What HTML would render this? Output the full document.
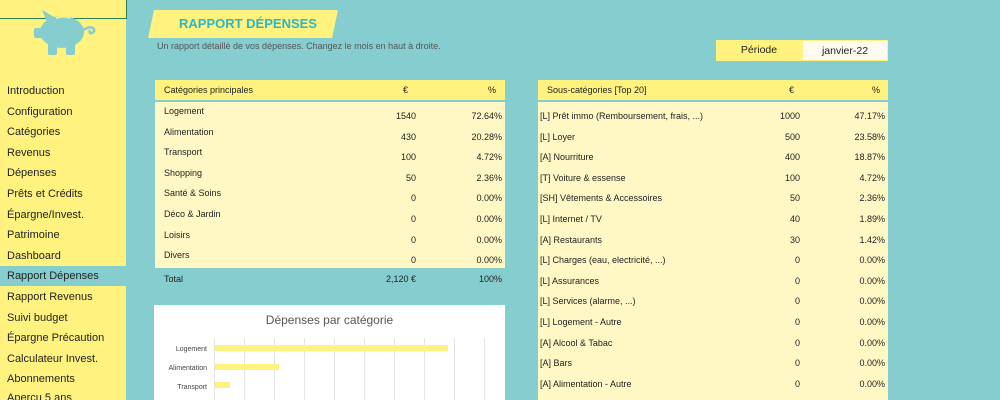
<!DOCTYPE html>
<html style="width:1000px;height:400px;overflow:hidden"><head><meta charset="utf-8"><style>
*{margin:0;padding:0;box-sizing:border-box}
body{width:1000px;height:400px;overflow:hidden;background:#86cdd0;font-family:"Liberation Sans",sans-serif;position:relative;color:#222}
.a{position:absolute;white-space:nowrap}
#side{position:absolute;left:0;top:0;width:126px;height:400px;background:#fff27f}
.nav{position:absolute;left:0;width:126px;height:20px;font-size:11px;padding-left:7px;line-height:20px;color:#222}
.row{position:absolute;font-size:9px;line-height:20.6px;height:20.6px}
</style></head><body>
<div id="side">
<div class="a" style="left:0;top:0;width:127px;height:19px;border:1px solid #2e7d4f;border-top:none;border-left:none"></div>
<svg class="a" style="left:32px;top:8px" width="66" height="48" viewBox="0 0 66 48">
<ellipse cx="30" cy="24" rx="22" ry="16" fill="#86cdd0"/>
<path d="M10 2 L24 10 L16 16Z" fill="#86cdd0"/>
<rect x="2" y="20" width="9" height="10" rx="2" fill="#86cdd0"/>
<rect x="16" y="34" width="9" height="13" rx="2" fill="#86cdd0"/>
<rect x="34" y="34" width="9" height="13" rx="2" fill="#86cdd0"/>
<path d="M51 22 q6 -4 10 -2 q3 3 -1 5 q-3 1 -2 -3" stroke="#86cdd0" stroke-width="2.5" fill="none"/>
<path d="M24 10 q8 -3 14 0" stroke="#fff27f" stroke-width="2" fill="none"/>
</svg>
</div>
<div class="nav" style="top:81px">Introduction</div>
<div class="nav" style="top:101.6px">Configuration</div>
<div class="nav" style="top:122.2px">Catégories</div>
<div class="nav" style="top:142.8px">Revenus</div>
<div class="nav" style="top:163.4px">Dépenses</div>
<div class="nav" style="top:184px">Prêts et Crédits</div>
<div class="nav" style="top:204.6px">Épargne/Invest.</div>
<div class="nav" style="top:225.2px">Patrimoine</div>
<div class="nav" style="top:245.8px">Dashboard</div>
<div class="nav" style="top:266px;background:#86cdd0">Rapport Dépenses</div>
<div class="nav" style="top:287px">Rapport Revenus</div>
<div class="nav" style="top:307.6px">Suivi budget</div>
<div class="nav" style="top:328.2px">Épargne Précaution</div>
<div class="nav" style="top:348.8px">Calculateur Invest.</div>
<div class="nav" style="top:369.4px">Abonnements</div>
<div class="nav" style="top:388px;height:12px;overflow:hidden">Aperçu 5 ans</div>

<svg class="a" style="left:148px;top:10px" width="192" height="28"><polygon points="6,0 190,0 184,28 0,28" fill="#fff27f"/></svg>
<div class="a" style="left:179px;top:16px;font-size:13px;font-weight:bold;color:#2db7c3">RAPPORT DÉPENSES</div>
<div class="a" style="left:157px;top:41px;font-size:9px;color:#555">Un rapport détaillé de vos dépenses. Changez le mois en haut à droite.</div>

<div class="a" style="left:716px;top:40px;width:86px;height:21px;background:#fff27f;font-size:10.5px;text-align:center;line-height:21px">Période</div>
<div class="a" style="left:802px;top:40px;width:86px;height:21px;background:#fffaf0;border:1px solid #fff27f;font-size:10.5px;text-align:center;line-height:20px">janvier-22</div>

<div class="a" style="left:155px;top:80px;width:350px;height:20px;background:#fff27f"></div>
<div class="a" style="left:155px;top:102px;width:350px;height:166px;background:#fff8c4"></div>
<div class="row" style="left:164px;top:80px">Catégories principales</div>
<div class="row" style="left:403px;top:80px">€</div>
<div class="row" style="left:488px;top:80px">%</div>
<div id="lt"></div>
<div class="row" style="left:164px;top:269px">Total</div>
<div class="row" style="left:350px;width:66px;text-align:right;top:269px">2,120 €</div>
<div class="row" style="left:440px;width:62px;text-align:right;top:269px">100%</div>

<div class="a" style="left:154px;top:305px;width:351px;height:95px;background:#fff"></div>
<div class="a" style="left:154px;top:313px;width:351px;text-align:center;font-size:12px;color:#555">Dépenses par catégorie</div>
<svg class="a" style="left:154px;top:305px" width="351" height="95">
<g stroke="#e4e4e4" stroke-width="1">
<line x1="60.5" y1="33" x2="60.5" y2="95"/><line x1="90.5" y1="33" x2="90.5" y2="95"/><line x1="120.5" y1="33" x2="120.5" y2="95"/><line x1="150.5" y1="33" x2="150.5" y2="95"/><line x1="180.5" y1="33" x2="180.5" y2="95"/><line x1="210.5" y1="33" x2="210.5" y2="95"/><line x1="240.5" y1="33" x2="240.5" y2="95"/><line x1="270.5" y1="33" x2="270.5" y2="95"/><line x1="300.5" y1="33" x2="300.5" y2="95"/><line x1="330.5" y1="33" x2="330.5" y2="95"/>
</g>
<rect x="61" y="40" width="233" height="6" fill="#fff27f"/>
<rect x="61" y="59" width="64" height="6" fill="#fff27f"/>
<rect x="61" y="77" width="15" height="6" fill="#fff27f"/>
<g font-size="7" fill="#444" text-anchor="end" font-family="Liberation Sans">
<text x="53" y="46">Logement</text><text x="53" y="65">Alimentation</text><text x="53" y="84">Transport</text></g>
</svg>

<div class="a" style="left:538px;top:80px;width:350px;height:20px;background:#fff27f"></div>
<div class="a" style="left:538px;top:102px;width:350px;height:298px;background:#fff8c4"></div>
<div class="row" style="left:547px;top:80px">Sous-catégories [Top 20]</div>
<div class="row" style="left:789px;top:80px">€</div>
<div class="row" style="left:872px;top:80px">%</div>
<div id="rt"></div>

<script>
var L=[["Logement","1540","72.64%"],["Alimentation","430","20.28%"],["Transport","100","4.72%"],["Shopping","50","2.36%"],["Santé & Soins","0","0.00%"],["Déco & Jardin","0","0.00%"],["Loisirs","0","0.00%"],["Divers","0","0.00%"]];
var h="";L.forEach(function(r,i){var t=102+i*20.6;
h+='<div class="row" style="left:164px;top:'+(t-1)+'px">'+r[0]+'</div><div class="row" style="left:350px;width:66px;text-align:right;top:'+(t+4)+'px">'+r[1]+'</div><div class="row" style="left:440px;width:62px;text-align:right;top:'+(t+4)+'px">'+r[2]+'</div>';});
document.getElementById("lt").innerHTML=h;
var R=[["[L] Prêt immo (Remboursement, frais, ...)","1000","47.17%"],["[L] Loyer","500","23.58%"],["[A] Nourriture","400","18.87%"],["[T] Voiture & essense","100","4.72%"],["[SH] Vêtements & Accessoires","50","2.36%"],["[L] Internet / TV","40","1.89%"],["[A] Restaurants","30","1.42%"],["[L] Charges (eau, electricité, ...)","0","0.00%"],["[L] Assurances","0","0.00%"],["[L] Services (alarme, ...)","0","0.00%"],["[L] Logement - Autre","0","0.00%"],["[A] Alcool & Tabac","0","0.00%"],["[A] Bars","0","0.00%"],["[A] Alimentation - Autre","0","0.00%"]];
h="";R.forEach(function(r,i){var t=106+i*20.6;
h+='<div class="row" style="left:540px;top:'+t+'px">'+r[0]+'</div><div class="row" style="left:740px;width:60px;text-align:right;top:'+t+'px">'+r[1]+'</div><div class="row" style="left:820px;width:65px;text-align:right;top:'+t+'px">'+r[2]+'</div>';});
document.getElementById("rt").innerHTML=h;
</script>
</body></html>
